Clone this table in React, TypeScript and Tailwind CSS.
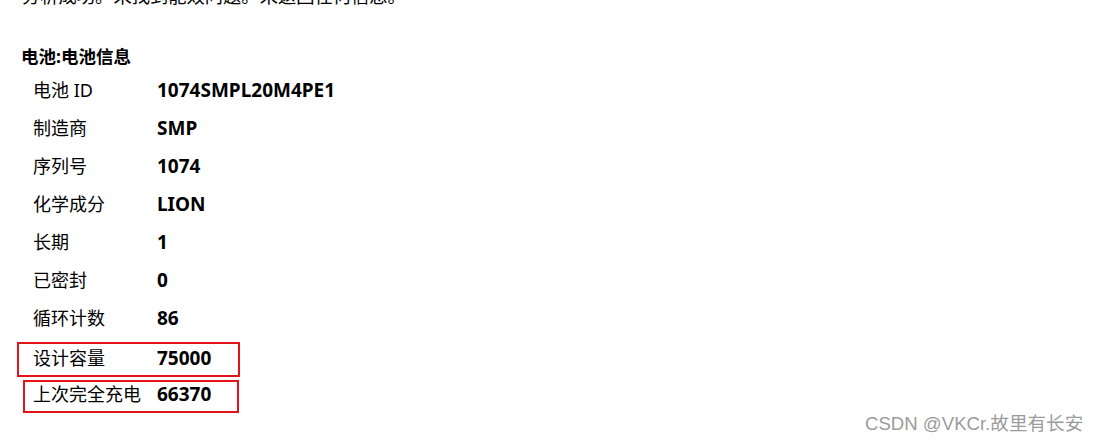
const rows = [
  { label: "电池 ID", value: "1074SMPL20M4PE1" },
  { label: "制造商", value: "SMP" },
  { label: "序列号", value: "1074" },
  { label: "化学成分", value: "LION" },
  { label: "长期", value: "1" },
  { label: "已密封", value: "0" },
  { label: "循环计数", value: "86" },
];

const font = "font-['Noto_Sans','Noto_Sans_CJK_SC',sans-serif]";

const Row = ({ label, value }: { label: string; value: string }) => (
  <div className="flex h-[38px] items-center pl-[16px]">
    <span className="w-[124px] text-[18px]">{label}</span>
    <span className="text-[19px] font-bold">{value}</span>
  </div>
);

export default function App() {
  return (
    <div className={`relative h-[441px] w-full overflow-hidden bg-white px-[17px] text-black ${font}`}>
      <div className="-mt-[16px] pl-[5px] text-[18.3px] leading-[24px]">
        分析成功。未找到能效问题。未返回任何信息。
      </div>
      <div className="mt-[36px] pl-[4px] text-[17.5px] font-bold leading-[24px]">电池:电池信息</div>
      <div className="mt-[3px] flex flex-col">
        {rows.map((r) => (
          <Row key={r.label} label={r.label} value={r.value} />
        ))}
        <div className="mt-[5px] flex h-[35px] w-[223px] items-center border-2 border-[#e3131b] pb-[3px] pl-[14px]">
          <span className="w-[124px] text-[18px]">设计容量</span>
          <span className="text-[19px] font-bold">75000</span>
        </div>
        <div className="ml-[6px] mt-[3px] flex h-[33px] w-[216px] items-center border-2 border-[#e3131b] pb-[4px] pl-[8px]">
          <span className="w-[124px] text-[18px]">上次完全充电</span>
          <span className="text-[19px] font-bold">66370</span>
        </div>
      </div>
      <div className="absolute left-[865px] top-[410px] font-['Liberation_Sans','Noto_Sans_CJK_SC',sans-serif] text-[18.6px] text-[#9b9b9b] [text-shadow:0_0_2px_#fff]">
        CSDN @VKCr.故里有长安
      </div>
    </div>
  );
}
